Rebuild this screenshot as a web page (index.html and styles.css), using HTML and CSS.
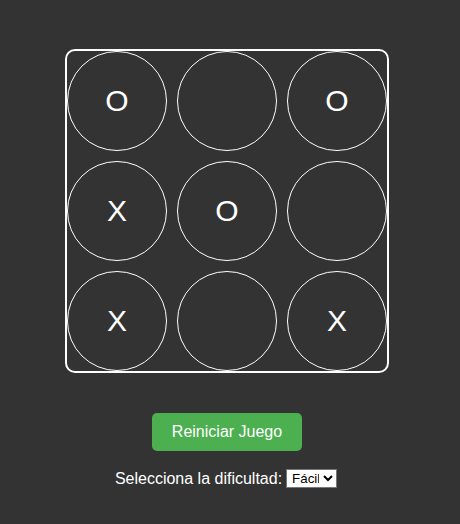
FILE: index.html
```html
<!DOCTYPE html>
<html lang="es">
<head>
<meta charset="utf-8">
<title>Tres en raya</title>
<link rel="stylesheet" href="styles.css">
</head>
<body>
<div class="app">
  <div class="board">
    <div class="cell">O</div>
    <div class="cell"></div>
    <div class="cell">O</div>
    <div class="cell">X</div>
    <div class="cell">O</div>
    <div class="cell"></div>
    <div class="cell">X</div>
    <div class="cell"></div>
    <div class="cell">X</div>
  </div>
  <button class="reset">Reiniciar Juego</button>
  <div class="difficulty">
    <label for="dif">Selecciona la dificultad:</label>
    <select id="dif" class="select">
      <option>Fácil</option>
      <option>Difícil</option>
    </select>
  </div>
</div>
</body>
</html>
```
FILE: styles.css
```css
html, body {
  margin: 0;
  padding: 0;
  background: #333333;
}
body {
  font-family: "Liberation Sans", Arial, sans-serif;
  color: #ffffff;
}
.app {
  width: 454px;
  display: flex;
  flex-direction: column;
  align-items: center;
  padding-top: 49px;
}
.board {
  display: grid;
  grid-template-columns: repeat(3, 100px);
  grid-auto-rows: 100px;
  gap: 10px;
  border: 2px solid #ffffff;
  border-radius: 10px;
}
.cell {
  box-sizing: border-box;
  width: 100px;
  height: 100px;
  border: 1px solid #ffffff;
  border-radius: 50%;
  display: flex;
  align-items: center;
  justify-content: center;
  font-size: 30px;
  color: #ffffff;
}
.reset {
  margin-top: 40px;
  background: #4caf50;
  color: #ffffff;
  border: none;
  border-radius: 5px;
  padding: 10px 20px;
  font-family: "Liberation Sans", Arial, sans-serif;
  font-size: 16px;
  line-height: 18px;
}
.difficulty {
  margin-top: 18px;
  margin-right: 2px;
  font-size: 16px;
  display: flex;
  align-items: center;
  gap: 4px;
}
.select {
  box-sizing: border-box;
  width: 51px;
  font-family: "Liberation Sans", Arial, sans-serif;
  font-size: 13.33px;
  background: #ffffff;
  color: #000000;
  border: 1px solid #767676;
  border-radius: 0;
  height: 19px;
  padding: 0 1px;
}
```
